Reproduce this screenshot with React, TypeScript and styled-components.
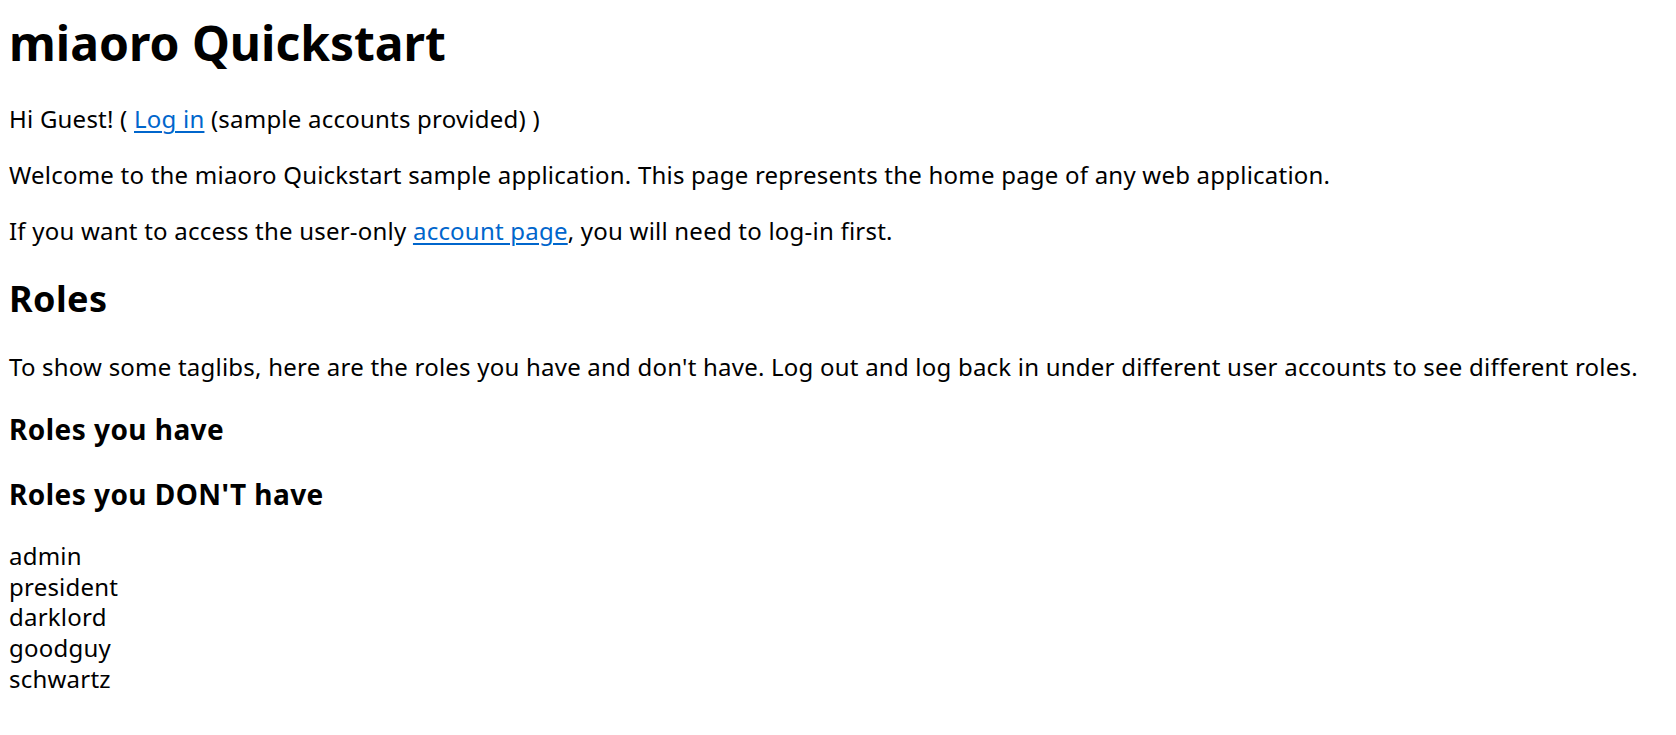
import React from "react";
import styled, { createGlobalStyle } from "styled-components";

const GlobalStyle = createGlobalStyle`
  html, body {
    margin: 0;
    padding: 0;
    background: #ffffff;
  }
  body {
    font-family: "Noto Sans", "Open Sans", "Noto Sans CJK SC", sans-serif;
    color: #000000;
  }
`;

const Page = styled.main`
  padding: 11px 8px 24px 9px;
  font-size: 24px;
  line-height: 1.32;
  letter-spacing: 0.22px;
`;

const Title = styled.h1`
  margin: 0 0 29px;
  font-size: 48px;
  font-weight: 700;
  line-height: 1.32;
  letter-spacing: 0;
`;

const SectionTitle = styled.h2`
  margin: 28.5px 0 29px;
  font-size: 36px;
  font-weight: 700;
  line-height: 1.32;
  letter-spacing: 0.4px;
`;

const SubTitle = styled.h3`
  margin: 28px 0;
  font-size: 28px;
  font-weight: 700;
  line-height: 1.32;
  letter-spacing: 0.45px;
`;

const Text = styled.p`
  margin: 24px 0;
`;

const Link = styled.a`
  color: #0066cc;
  text-decoration: underline;
  text-underline-offset: 3px;
  text-decoration-thickness: 1.5px;
`;

const RoleList = styled.div`
  margin-top: 27px;
  display: flex;
  flex-direction: column;
`;

const RoleItem = styled.div`
  line-height: 30.75px;
`;

const missingRoles = ["admin", "president", "darklord", "goodguy", "schwartz"];

export default function App() {
  return (
    <>
      <GlobalStyle />
      <Page>
        <Title>miaoro Quickstart</Title>
        <Text>
          Hi Guest! ( <Link href="#login">Log in</Link> (sample accounts provided) )
        </Text>
        <Text>
          Welcome to the miaoro Quickstart sample application. This page represents the home page of any web application.
        </Text>
        <Text>
          If you want to access the user-only <Link href="#account">account page</Link>, you will need to log-in first.
        </Text>
        <SectionTitle>Roles</SectionTitle>
        <Text>
          To show some taglibs, here are the roles you have and don't have. Log out and log back in under different user accounts to see different roles.
        </Text>
        <SubTitle>Roles you have</SubTitle>
        <SubTitle>Roles you DON'T have</SubTitle>
        <RoleList>
          {missingRoles.map((role) => (
            <RoleItem key={role}>{role}</RoleItem>
          ))}
        </RoleList>
      </Page>
    </>
  );
}
